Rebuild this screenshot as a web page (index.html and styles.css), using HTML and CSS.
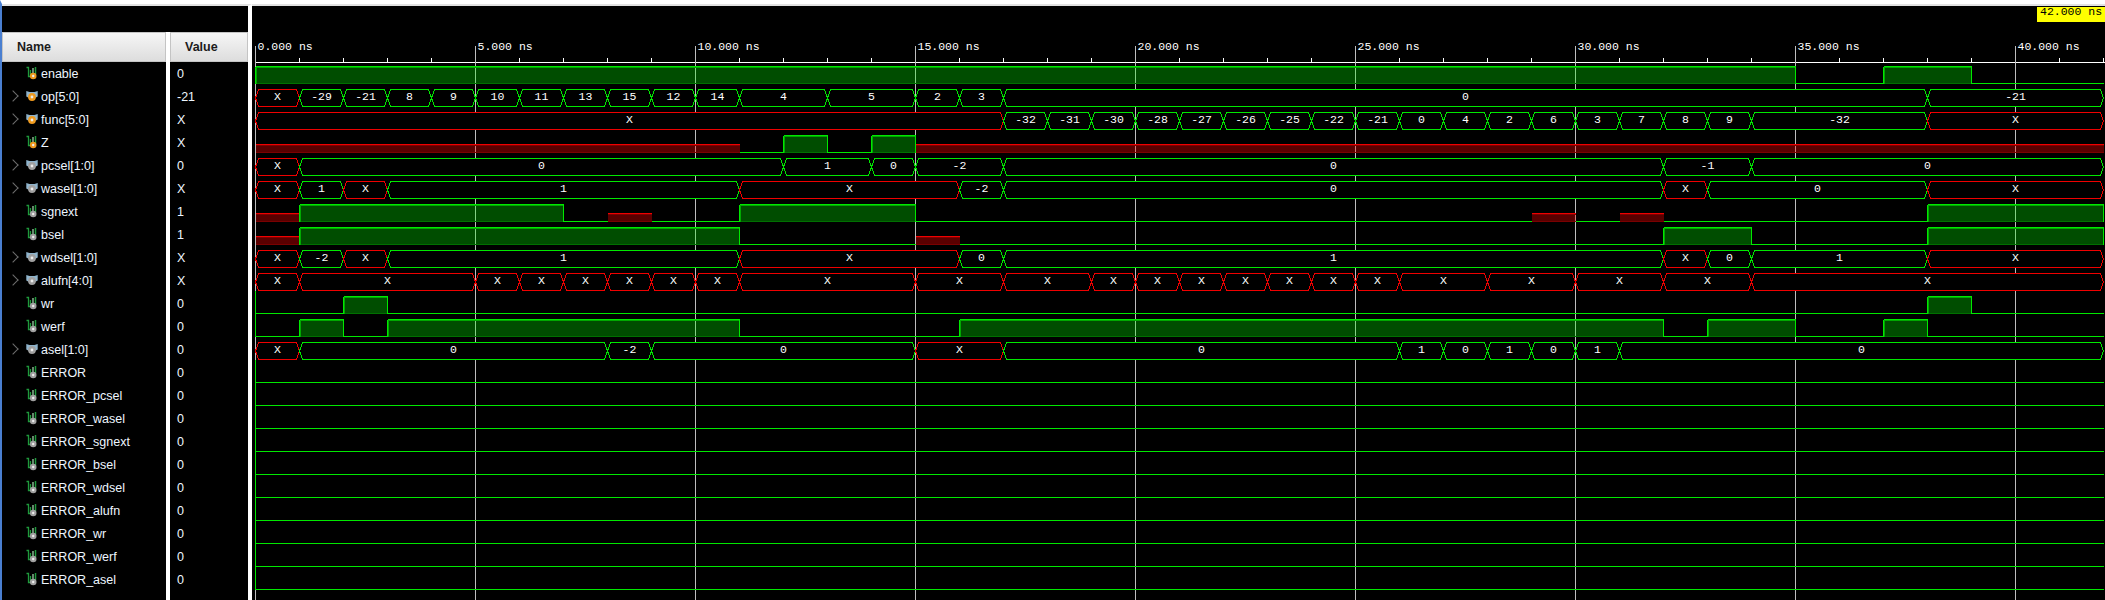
FILE: index.html
```html
<!DOCTYPE html>
<html lang="en">

<head>
    <meta charset="UTF-8">
    <title>Waveform</title>
    <link rel="stylesheet" href="styles.css">
</head>

<body>
    <svg class="icon-defs" width="0" height="0">
        <symbol id="icon-bit" viewBox="0 0 12 14">
            <path d="M0.5 1.5 H2.5 V10.5 H4.5 V4" fill="none" stroke="#1f9a3c" stroke-width="1.3"/>
            <path d="M9.5 1 V8" fill="none" stroke="#1f9a3c" stroke-width="1.5"/>
            <path d="M7 2 V8" fill="none" stroke="#9fd0a8" stroke-width="1.3"/>
            <circle cx="7.2" cy="10" r="3.3" fill="currentColor"/>
            <circle cx="7.2" cy="10" r="1.2" fill="#ececec"/>
        </symbol>
        <symbol id="icon-bus" viewBox="0 0 12 14">
            <path d="M0.3 2 L3.5 3 H8.5 L11.7 2 V7.5 L9 9 H3 L0.3 7.5 Z" fill="#8fb4cc"/>
            <circle cx="6" cy="8" r="3.9" fill="currentColor"/>
            <circle cx="6" cy="8" r="1.4" fill="#ececec"/>
        </symbol>
    </svg>

    <div class="window">
        <div class="side">
            <div class="side-top"></div>
            <div class="columns">
                <div class="names">
                    <div class="col-head name-head">Name</div>
                    <div class="row"><svg class="icon hot"><use href="#icon-bit"/></svg><span>enable</span></div>
                    <div class="row"><i class="chev"></i><svg class="icon hot"><use href="#icon-bus"/></svg><span>op[5:0]</span></div>
                    <div class="row"><i class="chev"></i><svg class="icon hot"><use href="#icon-bus"/></svg><span>func[5:0]</span></div>
                    <div class="row"><svg class="icon hot"><use href="#icon-bit"/></svg><span>Z</span></div>
                    <div class="row"><i class="chev"></i><svg class="icon"><use href="#icon-bus"/></svg><span>pcsel[1:0]</span></div>
                    <div class="row"><i class="chev"></i><svg class="icon"><use href="#icon-bus"/></svg><span>wasel[1:0]</span></div>
                    <div class="row"><svg class="icon"><use href="#icon-bit"/></svg><span>sgnext</span></div>
                    <div class="row"><svg class="icon"><use href="#icon-bit"/></svg><span>bsel</span></div>
                    <div class="row"><i class="chev"></i><svg class="icon"><use href="#icon-bus"/></svg><span>wdsel[1:0]</span></div>
                    <div class="row"><i class="chev"></i><svg class="icon"><use href="#icon-bus"/></svg><span>alufn[4:0]</span></div>
                    <div class="row"><svg class="icon"><use href="#icon-bit"/></svg><span>wr</span></div>
                    <div class="row"><svg class="icon"><use href="#icon-bit"/></svg><span>werf</span></div>
                    <div class="row"><i class="chev"></i><svg class="icon"><use href="#icon-bus"/></svg><span>asel[1:0]</span></div>
                    <div class="row"><svg class="icon"><use href="#icon-bit"/></svg><span>ERROR</span></div>
                    <div class="row"><svg class="icon"><use href="#icon-bit"/></svg><span>ERROR_pcsel</span></div>
                    <div class="row"><svg class="icon"><use href="#icon-bit"/></svg><span>ERROR_wasel</span></div>
                    <div class="row"><svg class="icon"><use href="#icon-bit"/></svg><span>ERROR_sgnext</span></div>
                    <div class="row"><svg class="icon"><use href="#icon-bit"/></svg><span>ERROR_bsel</span></div>
                    <div class="row"><svg class="icon"><use href="#icon-bit"/></svg><span>ERROR_wdsel</span></div>
                    <div class="row"><svg class="icon"><use href="#icon-bit"/></svg><span>ERROR_alufn</span></div>
                    <div class="row"><svg class="icon"><use href="#icon-bit"/></svg><span>ERROR_wr</span></div>
                    <div class="row"><svg class="icon"><use href="#icon-bit"/></svg><span>ERROR_werf</span></div>
                    <div class="row"><svg class="icon"><use href="#icon-bit"/></svg><span>ERROR_asel</span></div>
                </div>
                <div class="values">
                    <div class="col-head value-head">Value</div>
                    <div class="row">0</div>
                    <div class="row">-21</div>
                    <div class="row">X</div>
                    <div class="row">X</div>
                    <div class="row">0</div>
                    <div class="row">X</div>
                    <div class="row">1</div>
                    <div class="row">1</div>
                    <div class="row">X</div>
                    <div class="row">X</div>
                    <div class="row">0</div>
                    <div class="row">0</div>
                    <div class="row">0</div>
                    <div class="row">0</div>
                    <div class="row">0</div>
                    <div class="row">0</div>
                    <div class="row">0</div>
                    <div class="row">0</div>
                    <div class="row">0</div>
                    <div class="row">0</div>
                    <div class="row">0</div>
                    <div class="row">0</div>
                    <div class="row">0</div>
                </div>
            </div>
        </div>
        <div class="wave-pane">
            <svg id="wave" class="wave"></svg>
            <div class="cursor-time">42.000 ns</div>
        </div>
    </div>

    <script src="wave.js"></script>
</body>

</html>
```

FILE: styles.css
```css
* {
    box-sizing: border-box;
}

body {
    margin: 0;
    background-color: #fff;
    overflow: hidden;
}

.icon-defs {
    position: absolute;
}

.window {
    display: flex;
    width: 2105px;
    height: 600px;
    border-top: 4px solid #fff;
    border-left: 2px solid #4a7fd0;
}

.side {
    display: flex;
    flex-direction: column;
    width: 250px;
    border-top: 2px solid #e2e2e2;
    border-right: 4px solid #fff;
    font-family: "Liberation Sans", Arial, sans-serif;
    font-size: 12.5px;
    color: #eef6ff;
}

.side-top {
    height: 26px;
    background-color: #000;
}

.columns {
    display: flex;
    flex: 1;
    gap: 4px;
    background-color: #fff;
}

.names {
    width: 164px;
    background-color: #000;
}

.values {
    flex: 1;
    background-color: #000;
}

.col-head {
    display: flex;
    align-items: center;
    height: 30px;
    font-weight: bold;
    font-size: 12.5px;
    color: #1c1c1c;
    background: linear-gradient(#f6f6f6, #dddddd);
    border: 1px solid #c4c4c4;
}

.name-head {
    padding-left: 14px;
}

.value-head {
    padding-left: 14px;
}

.row {
    position: relative;
    display: flex;
    align-items: center;
    height: 23px;
}

.names .row {
    padding-left: 39px;
}

.values .row {
    padding-left: 7px;
}

.chev {
    position: absolute;
    left: 7px;
    top: 7px;
    width: 8px;
    height: 8px;
    border-top: 1.5px solid #6e6e6e;
    border-right: 1.5px solid #6e6e6e;
    transform: rotate(45deg);
}

.icon {
    position: absolute;
    left: 24px;
    top: 4px;
    width: 12px;
    height: 14px;
    color: #a0a0a0;
}

.icon.hot {
    color: #ef9a1e;
}

.wave-pane {
    position: relative;
    flex: 1;
    background-color: #000;
    border-top: 2px solid #e2e2e2;
}

.wave {
    display: block;
    width: 100%;
    height: 100%;
    shape-rendering: crispEdges;
}

.cursor-time {
    position: absolute;
    right: 0;
    top: 1px;
    width: 68px;
    height: 15px;
    padding-left: 3px;
    background-color: #ff0;
    color: #000;
    font-family: "Liberation Mono", monospace;
    font-size: 11.5px;
    line-height: 10px;
}

/* waveform */
.axis {
    stroke: #fff;
    fill: none;
}

.grid {
    stroke: #bdbdbd;
    fill: none;
}

.time-label,
.bus-label {
    fill: #fff;
    font-family: "Liberation Mono", monospace;
    font-size: 11.5px;
}

.bus-label {
    text-anchor: middle;
}

.bus {
    fill: #000;
    stroke: #00e800;
}

.bus.unknown {
    stroke: #f00000;
}

.line {
    stroke: #00e800;
    fill: none;
}

.line.dim {
    stroke: #007000;
}

.line.soft {
    stroke: #00a800;
}

.high-fill {
    fill: rgba(0, 255, 0, 0.3);
}

.unknown-fill {
    fill: rgba(255, 0, 0, 0.35);
}

.line-x {
    stroke: #f00000;
    fill: none;
}

.line-x.dim {
    stroke: #7a0000;
}

.line-x.soft {
    stroke: #800000;
}
```

FILE: wave.js
```js
// one entry per signal: [start ns, value], each one lasts until the next start
const END_NS = 42;
const PX_PER_NS = 44;
const ORIGIN_X = 3.5; // svg x of 0 ns, the svg starts at page x 252
const SVG_TOP = 6;    // page y of the svg top

const ONES = [[0, '0']];

const signals = [
    { bit: [[0, '1'], [35, '0'], [37, '1'], [39, '0']] },
    { bus: [[0, 'X'], [1, '-29'], [2, '-21'], [3, '8'], [4, '9'], [5, '10'], [6, '11'], [7, '13'], [8, '15'], [9, '12'], [10, '14'], [11, '4'], [13, '5'], [15, '2'], [16, '3'], [17, '0'], [38, '-21']] },
    { bus: [[0, 'X'], [17, '-32'], [18, '-31'], [19, '-30'], [20, '-28'], [21, '-27'], [22, '-26'], [23, '-25'], [24, '-22'], [25, '-21'], [26, '0'], [27, '4'], [28, '2'], [29, '6'], [30, '3'], [31, '7'], [32, '8'], [33, '9'], [34, '-32'], [38, 'X']] },
    { bit: [[0, 'X'], [11, '0'], [12, '1'], [13, '0'], [14, '1'], [15, 'X']] },
    { bus: [[0, 'X'], [1, '0'], [12, '1'], [14, '0'], [15, '-2'], [17, '0'], [32, '-1'], [34, '0']] },
    { bus: [[0, 'X'], [1, '1'], [2, 'X'], [3, '1'], [11, 'X'], [16, '-2'], [17, '0'], [32, 'X'], [33, '0'], [38, 'X']] },
    { bit: [[0, 'X'], [1, '1'], [7, '0'], [8, 'X'], [9, '0'], [11, '1'], [15, '0'], [29, 'X'], [30, '0'], [31, 'X'], [32, '0'], [38, '1']] },
    { bit: [[0, 'X'], [1, '1'], [11, '0'], [15, 'X'], [16, '0'], [32, '1'], [34, '0'], [38, '1']] },
    { bus: [[0, 'X'], [1, '-2'], [2, 'X'], [3, '1'], [11, 'X'], [16, '0'], [17, '1'], [32, 'X'], [33, '0'], [34, '1'], [38, 'X']] },
    { bus: [0, 1, 5, 6, 7, 8, 9, 10, 11, 15, 17, 19, 20, 21, 22, 23, 24, 25, 26, 28, 30, 32, 34].map((t) => [t, 'X']) },
    { bit: [[0, '0'], [2, '1'], [3, '0'], [38, '1'], [39, '0']] },
    { bit: [[0, '0'], [1, '1'], [2, '0'], [3, '1'], [11, '0'], [16, '1'], [32, '0'], [33, '1'], [35, '0'], [37, '1'], [38, '0']] },
    { bus: [[0, 'X'], [1, '0'], [8, '-2'], [9, '0'], [15, 'X'], [17, '0'], [26, '1'], [27, '0'], [28, '1'], [29, '0'], [30, '1'], [31, '0']] },
];
for (let i = 0; i < 10; i++) {
    signals.push({ bit: ONES });
}

const svg = document.getElementById('wave');
const NS = 'http://www.w3.org/2000/svg';

function add(tag, attrs, text) {
    const el = document.createElementNS(NS, tag);
    for (const key in attrs) {
        el.setAttribute(key, attrs[key]);
    }
    if (text !== undefined) {
        el.textContent = text;
    }
    svg.appendChild(el);
    return el;
}

function line(cls, x1, y1, x2, y2) {
    add('line', { class: cls, x1, y1, x2, y2 });
}

const xAt = (t) => ORIGIN_X + t * PX_PER_NS;

// ruler
line('axis', 3, 62.5 - SVG_TOP, 1853, 62.5 - SVG_TOP);
for (let t = 0; t <= END_NS; t++) {
    if (t % 5 === 0) {
        line('grid', xAt(t), 46 - SVG_TOP, xAt(t), 600);
        add('text', { class: 'time-label', x: xAt(t) + 2, y: 49.5 - SVG_TOP }, t + '.000 ns');
    } else {
        line('axis', xAt(t), 58 - SVG_TOP, xAt(t), 62 - SVG_TOP);
    }
}

function drawBit(segs, top) {
    const bottom = top + 17;
    const mid = top + 8.5;
    segs.forEach(([start, val], i) => {
        const end = i + 1 < segs.length ? segs[i + 1][0] : END_NS;
        const x1 = xAt(start);
        const x2 = xAt(end);
        if (val === '0') {
            line('line', x1, bottom, x2, bottom);
        } else if (val === '1') {
            add('rect', { class: 'high-fill', x: x1, y: top, width: x2 - x1, height: 17 });
            line('line', x1, top, x2, top);
            line('line soft', x1, top + 1, x2, top + 1);
            line('line dim', x1 + 1, bottom, x2, bottom);
            line('line soft', x1 + 1, top + 1, x1 + 1, bottom);
            line('line', x1, top, x1, bottom);
            line('line', x2, top, x2, bottom);
        } else {
            add('rect', { class: 'unknown-fill', x: x1, y: mid, width: x2 - x1, height: 8.5 });
            line('line-x', x1, mid, x2, mid);
            line('line-x soft', x1, mid + 1, x2, mid + 1);
            line('line-x dim', x1, bottom, x2, bottom);
        }
    });
    if (segs[0][1] === '0') {
        line('line', xAt(0), top - 6, xAt(0), bottom);
    }
}

function drawBus(segs, top) {
    const bottom = top + 17;
    const mid = top + 8.5;
    segs.forEach(([start, val], i) => {
        const end = i + 1 < segs.length ? segs[i + 1][0] : END_NS;
        const x1 = xAt(start);
        const x2 = xAt(end);
        const points = [
            [x1, mid], [x1 + 3, top], [x2 - 3, top],
            [x2, mid], [x2 - 3, bottom], [x1 + 3, bottom],
        ].join(' ');
        const unknown = val === 'X';
        add('polygon', { class: unknown ? 'bus unknown' : 'bus', points });
        add('text', { class: 'bus-label', x: (x1 + x2) / 2, y: mid + 1.5 }, val);
    });
}

signals.forEach((sig, i) => {
    const top = 66.5 - SVG_TOP + i * 23;
    if (sig.bit) {
        drawBit(sig.bit, top);
    } else {
        drawBus(sig.bus, top);
    }
});
```
